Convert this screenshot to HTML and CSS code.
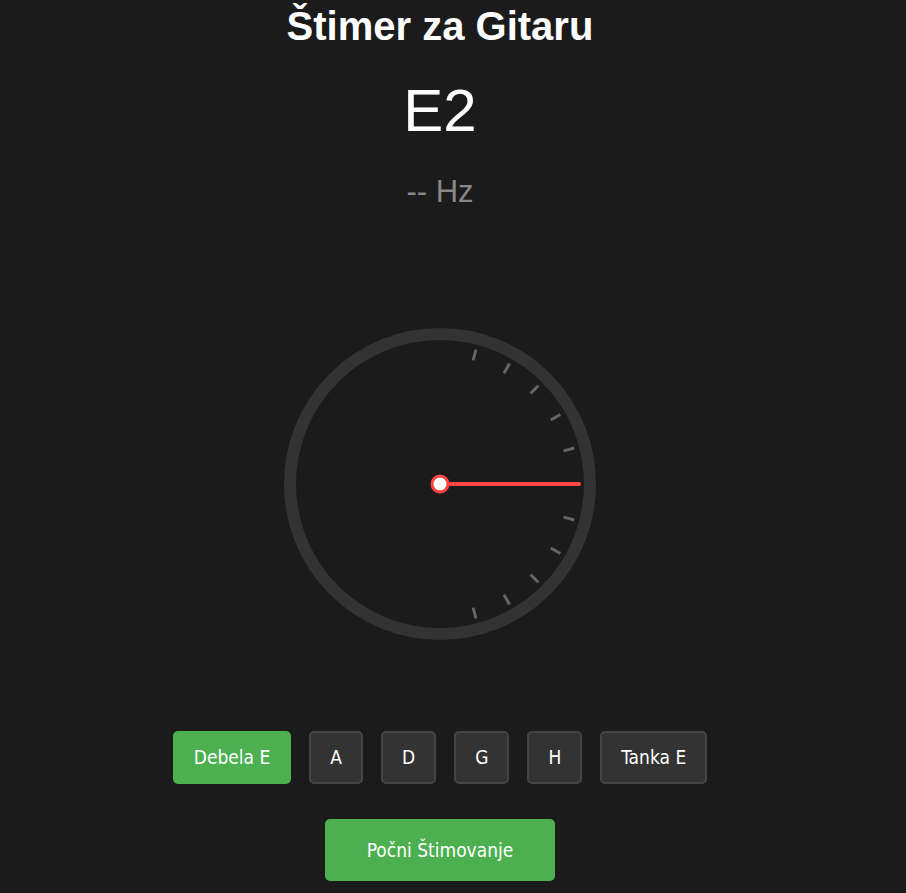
FILE: index.html
```html
<!DOCTYPE html>
<html lang="hr">
<head>
<meta charset="utf-8">
<title>Štimer za Gitaru</title>
<link rel="stylesheet" href="styles.css">
</head>
<body>
<div class="app">
  <h1 class="title">Štimer za Gitaru</h1>
  <div class="note">E2</div>
  <div class="freq">-- Hz</div>
  <svg class="gauge" width="320" height="320" viewBox="0 0 320 320">
    <circle cx="160" cy="160" r="150" fill="none" stroke="#333" stroke-width="12"/>
    <g stroke="#666" stroke-width="3" stroke-linecap="butt">
      <line x1="288" y1="160" x2="299" y2="160" transform="rotate(-75 160 160)"/>
      <line x1="288" y1="160" x2="299" y2="160" transform="rotate(-60 160 160)"/>
      <line x1="288" y1="160" x2="299" y2="160" transform="rotate(-45 160 160)"/>
      <line x1="288" y1="160" x2="299" y2="160" transform="rotate(-30 160 160)"/>
      <line x1="288" y1="160" x2="299" y2="160" transform="rotate(-15 160 160)"/>
      <line x1="288" y1="160" x2="299" y2="160"/>
      <line x1="288" y1="160" x2="299" y2="160" transform="rotate(15 160 160)"/>
      <line x1="288" y1="160" x2="299" y2="160" transform="rotate(30 160 160)"/>
      <line x1="288" y1="160" x2="299" y2="160" transform="rotate(45 160 160)"/>
      <line x1="288" y1="160" x2="299" y2="160" transform="rotate(60 160 160)"/>
      <line x1="288" y1="160" x2="299" y2="160" transform="rotate(75 160 160)"/>
    </g>
    <line x1="160" y1="160" x2="299" y2="160" stroke="#ff4444" stroke-width="4" stroke-linecap="round"/>
    <circle cx="160" cy="160" r="8" fill="#fff" stroke="#ff4444" stroke-width="3"/>
  </svg>
  <div class="strings">
    <button class="string active">Debela E</button>
    <button class="string">A</button>
    <button class="string">D</button>
    <button class="string">G</button>
    <button class="string">H</button>
    <button class="string">Tanka E</button>
  </div>
  <button class="start">Počni Štimovanje</button>
</div>
</body>
</html>
```
FILE: styles.css
```css
html, body {
  margin: 0;
  padding: 0;
  background: #1b1b1b;
  color: #fff;
}

.app {
  width: 880px;
  display: flex;
  flex-direction: column;
  align-items: center;
  font-family: "Liberation Sans", Arial, sans-serif;
}

.title {
  margin: 3px 0 0;
  font-size: 40px;
  line-height: 46px;
  font-weight: bold;
}

.note {
  margin-top: 27px;
  font-size: 60px;
  line-height: 70px;
}

.freq {
  margin-top: 26px;
  font-size: 31px;
  line-height: 40px;
  color: #888;
}

.gauge {
  display: block;
  margin-top: 112px;
}

.strings {
  margin-top: 87px;
  display: flex;
  gap: 18px;
}

.string {
  font-family: "DejaVu Sans Condensed", "DejaVu Sans", sans-serif;
  font-size: 19px;
  line-height: 21px;
  padding: 14px 19px;
  background: #333;
  color: #fff;
  border: 2px solid #444;
  border-radius: 5px;
}

.string.active {
  background: #4caf50;
  border-color: #4caf50;
}

.start {
  margin-top: 35px;
  font-family: "DejaVu Sans Condensed", "DejaVu Sans", sans-serif;
  font-size: 19px;
  line-height: 22px;
  padding: 20px 42px;
  background: #4caf50;
  color: #fff;
  border: none;
  border-radius: 5px;
}
```
